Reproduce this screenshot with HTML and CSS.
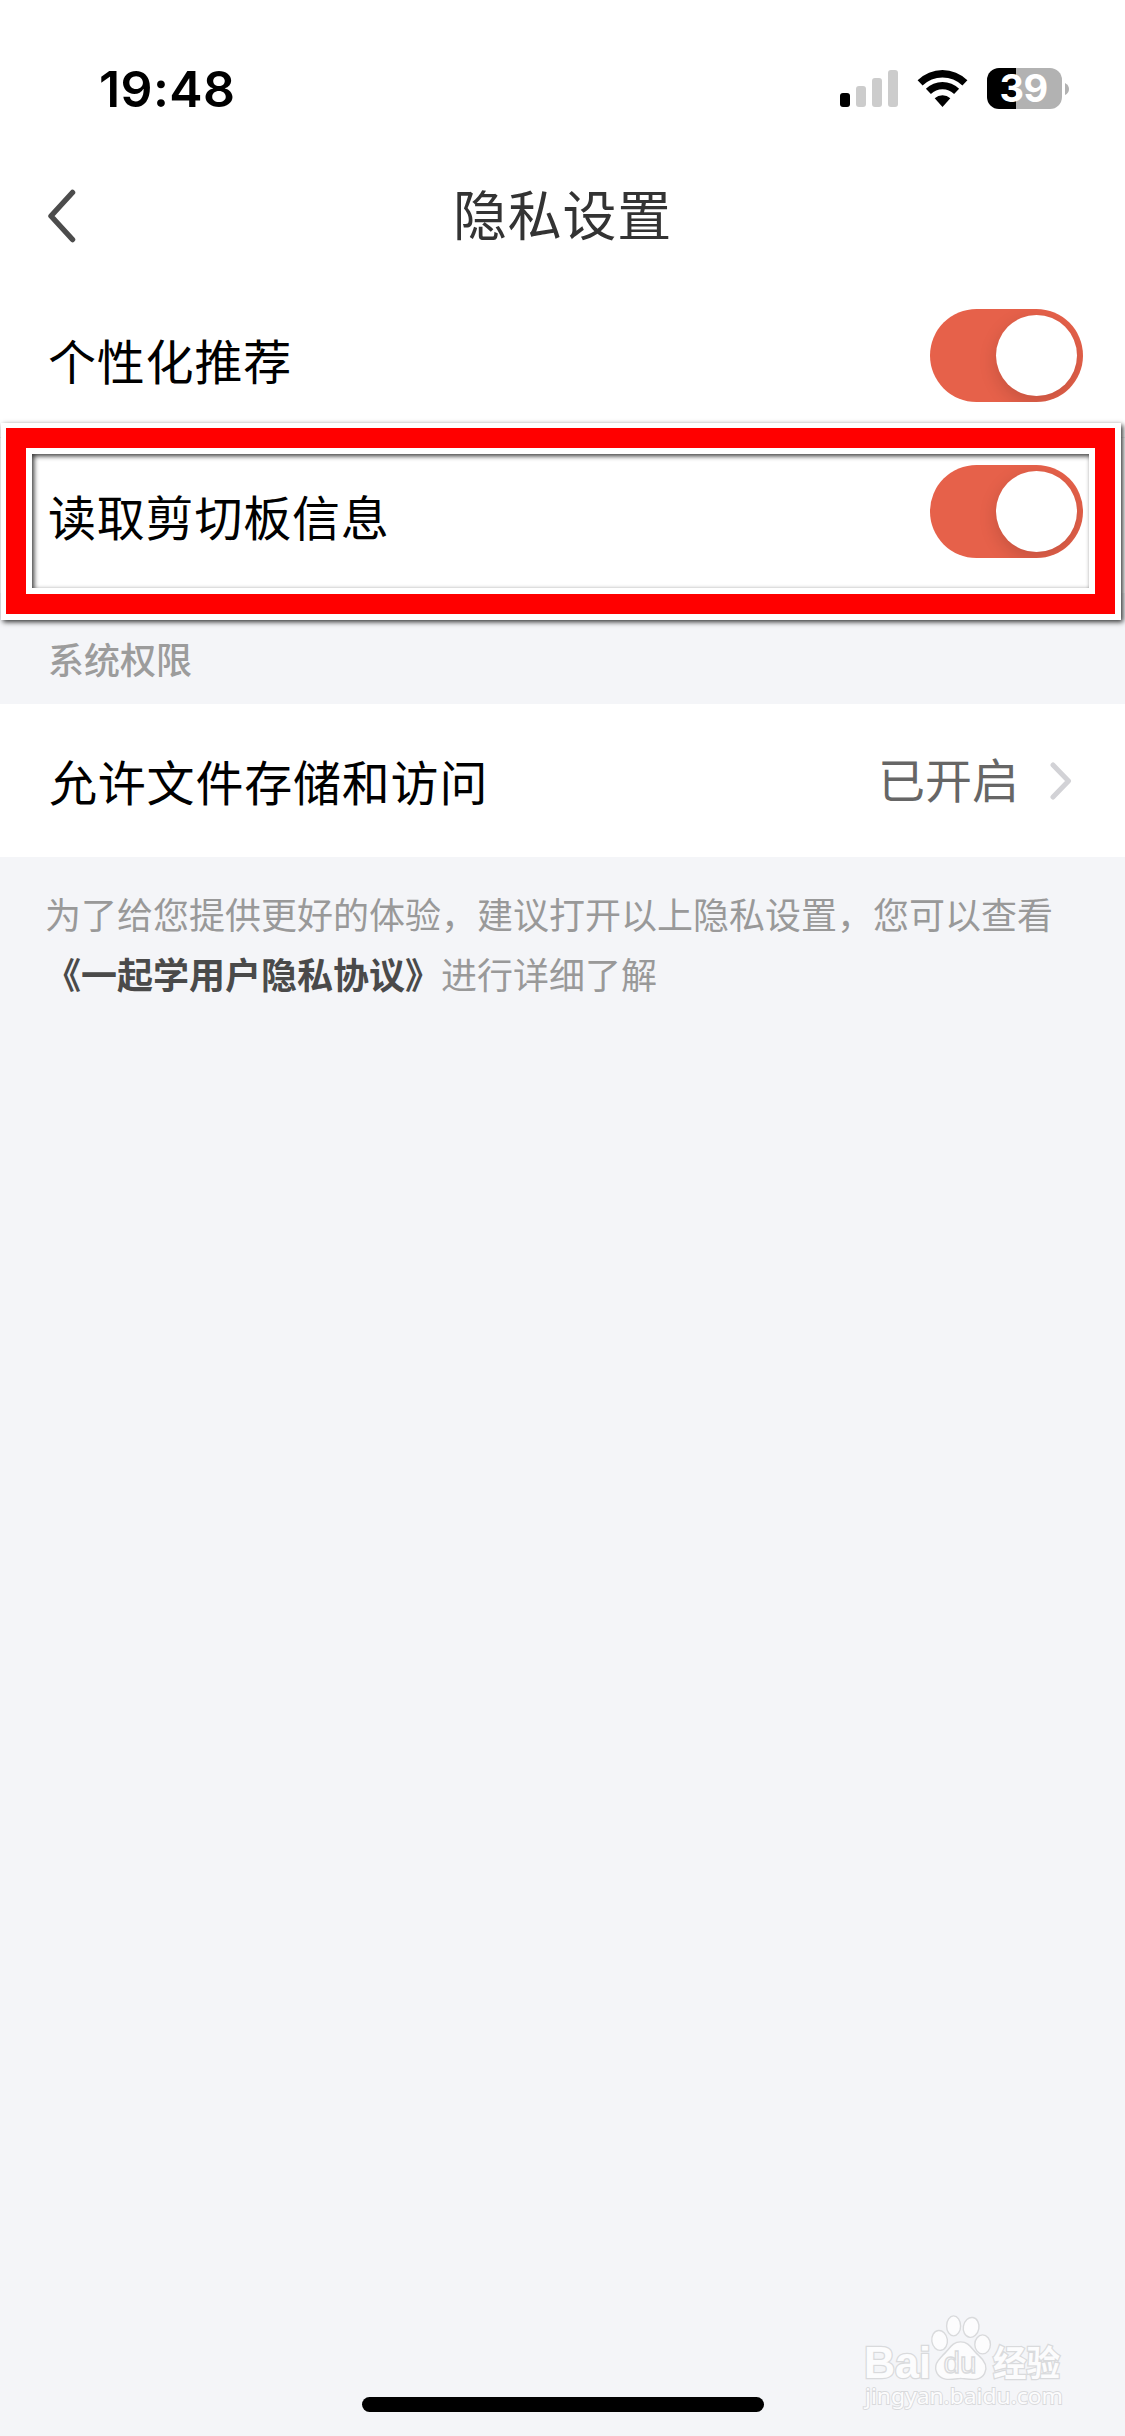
FILE: index.html
```html
<!DOCTYPE html>
<html lang="zh-CN">
<head>
<meta charset="utf-8">
<title>隐私设置</title>
<link rel="stylesheet" href="styles.css">
</head>
<body>
<div class="screen">
  <header class="status">
    <span class="time">19:48</span>
    <div class="indicators">
      <svg class="signal" width="58" height="37" viewBox="0 0 58 37">
        <rect x="0" y="23" width="10" height="14" rx="3" fill="#000"/>
        <rect x="16" y="16" width="10" height="21" rx="3" fill="#ccc"/>
        <rect x="32" y="8" width="10" height="29" rx="3" fill="#ccc"/>
        <rect x="48" y="0" width="10" height="37" rx="3" fill="#ccc"/>
      </svg>
      <svg class="wifi" width="51" height="37" viewBox="0 0 51 37">
        <path d="M0.6 10.3A35.5 35.5 0 0 1 50.4 10.3L45.4 15.6A28.2 28.2 0 0 0 5.6 15.6Z"/>
        <path d="M8.9 18.8A23.6 23.6 0 0 1 42.1 18.8L37.1 24A16.6 16.6 0 0 0 13.9 24Z"/>
        <path d="M17.7 28.3A11.5 11.5 0 0 1 33.3 28.3L25.5 37Z"/>
      </svg>
      <div class="battery"><span class="level">39</span></div>
      <svg class="nub" width="4" height="12" viewBox="0 0 4 12"><path d="M0 0Q4 2 4 6Q4 10 0 12Z" fill="#b2b2b2"/></svg>
    </div>
  </header>

  <nav class="nav">
    <svg class="back" width="29" height="54" viewBox="0 0 29 54"><path d="M25.5 3.500L4 27L25.500 50.500" fill="none" stroke="#4c4c4c" stroke-width="5.500" stroke-linecap="round" stroke-linejoin="round"/></svg>
    <h1 class="title">隐私设置</h1>
  </nav>

  <section class="group">
    <div class="row">
      <span class="label">个性化推荐</span>
      <span class="toggle"><span class="knob"></span></span>
    </div>
    <div class="row bordered">
      <span class="label">读取剪切板信息</span>
      <span class="toggle"><span class="knob"></span></span>
      <div class="highlight"><div class="highlight-red"><div class="highlight-inner"></div></div></div>
    </div>
  </section>

  <h2 class="section-title">系统权限</h2>

  <section class="group">
    <div class="row access">
      <span class="label">允许文件存储和访问</span>
      <span class="value">已开启</span>
      <svg class="chevron" width="22" height="38" viewBox="0 0 22 38"><path d="M3 3L18.5 19L3 35" fill="none" stroke="#d2d2d6" stroke-width="5" stroke-linecap="round" stroke-linejoin="round"/></svg>
    </div>
  </section>

  <p class="note">为了给您提供更好的体验，建议打开以上隐私设置，您可以查看<br><strong>《一起学用户隐私协议》</strong>进行详细了解</p>

  <footer class="bottom">
    <svg class="watermark" width="212" height="114" viewBox="0 0 212 114">
      <g fill="#fcfcfd" stroke="#d9dadc" stroke-width="1.4">
        <g stroke-width="2.6" paint-order="stroke">
          <text class="wm-brand" x="6" y="74" textLength="67" lengthAdjust="spacingAndGlyphs">Bai</text>
          <text class="wm-cn" x="135" y="72" textLength="67" lengthAdjust="spacingAndGlyphs">经验</text>
          <text class="wm-url" x="7" y="100" textLength="198" lengthAdjust="spacingAndGlyphs">jingyan.baidu.com</text>
        </g>
        <g transform="translate(1.6 1.4)">
          <ellipse cx="80" cy="35" rx="7.800" ry="10" transform="rotate(-8 80 35)"/>
          <ellipse cx="94" cy="20.500" rx="7" ry="10"/>
          <ellipse cx="111.500" cy="22" rx="7.800" ry="10" transform="rotate(10 111.500 22)"/>
          <ellipse cx="123" cy="39" rx="7.800" ry="9.500"/>
          <path d="M101 36.500C110 36.500 112 44 119 50C126 56 128 62 125 68C121 76 112 74 101 73C91 74 82 76 77.500 68C74 61 77 56 83 50C90 44 92 36.500 101 36.500Z"/>
          <text class="wm-du" x="84" y="68" textLength="33" lengthAdjust="spacingAndGlyphs">du</text>
        </g>
      </g>
    </svg>
    <div class="home-bar"></div>
  </footer>
</div>
</body>
</html>
```
FILE: styles.css
```css
* { box-sizing: border-box; }
body { margin: 0; background: #f4f5f8; }
.screen {
  width: 1125px;
  height: 2436px;
  display: flex;
  flex-direction: column;
  overflow: hidden;
  font-family: "Noto Sans CJK SC", sans-serif;
  color: #000;
}
.status {
  height: 147px;
  flex: none;
  display: flex;
  justify-content: space-between;
  padding: 59px 56px 0 99px;
  background: #fff;
}
.time {
  font: 600 50px/60px Inter, sans-serif;
  letter-spacing: 0.4px;
}
.indicators { display: flex; align-items: center; height: 59px; }
.wifi { margin-left: 19px; }
.battery {
  width: 75px;
  height: 41px;
  margin-left: 19px;
  border-radius: 12px;
  background: linear-gradient(90deg, #000 29px, #b2b2b2 29px);
  display: flex;
  justify-content: center;
  padding-right: 2px;
}
.level { font: 700 38px/41px Inter, sans-serif; color: #fff; letter-spacing: -0.5px; }
.nub { margin-left: 3px; }
.nav {
  height: 134px;
  flex: none;
  display: grid;
  grid-template-columns: 120px 1fr 120px;
  align-items: center;
  padding-bottom: 2px;
  background: #fff;
}
.back { margin: 6px 0 0 47px; }
.title {
  margin: 0;
  text-align: center;
  font-size: 54px;
  line-height: 80px;
  font-weight: 400;
  letter-spacing: 0.8px;
  color: #333;
}
.group { background: #fff; flex: none; }
.row {
  height: 156px;
  display: flex;
  align-items: center;
  padding: 0 42px 0 48px;
  position: relative;
}
.label { font-size: 48px; line-height: 72px; letter-spacing: 0.8px; flex: 1; }
.bordered { box-shadow: inset 0 1px #eeeff1; }
.toggle {
  width: 153px;
  height: 93px;
  margin-bottom: 7px;
  border-radius: 47px;
  background: #e6614a;
  display: flex;
  justify-content: flex-end;
  padding: 6px;
  overflow: hidden;
}
.knob {
  width: 81px;
  height: 81px;
  border-radius: 50%;
  background: #fff;
  box-shadow: 0 6px 18px rgba(0, 0, 0, 0.15);
}
.highlight {
  position: absolute;
  left: 1px;
  top: -14px;
  width: 1120px;
  height: 197px;
  border: 5px solid #fff;
  border-right-width: 6px;
  border-bottom-width: 6px;
  box-shadow: 2px 2px 5px rgba(0, 0, 0, 0.8);
}
.highlight-red { height: 100%; border: 20px solid #f00; }
.highlight-inner {
  height: 100%;
  border: 6px solid #fff;
}
.highlight-inner::after {
  content: "";
  display: block;
  height: 100%;
  box-shadow: inset 2px 2px 5px rgba(0, 0, 0, 0.8);
}
.section-title {
  height: 111px;
  flex: none;
  margin: 0;
  padding: 38px 48px 0;
  font-size: 36px;
  line-height: 54px;
  font-weight: 500;
  color: #9c9c9c;
}
.access { height: 153px; padding-right: 53px; }
.access .label { padding: 0 0 2px 1px; }
.value { font-size: 47px; line-height: 72px; color: #666; margin: 0 31px 6px 0; }
.note {
  margin: 26px 45px 0;
  font-size: 36px;
  line-height: 60px;
  color: #999;
  white-space: nowrap;
}
.note strong { color: #4a4a4a; font-weight: 700; }
.bottom {
  margin-top: auto;
  display: flex;
  flex-direction: column;
  padding-bottom: 24px;
}
.watermark { align-self: flex-end; margin: 0 55px -21px 0; overflow: visible; }
.wm-brand { font: 700 44px "Liberation Sans", sans-serif; }
.wm-du { font: 400 30px "Liberation Sans", sans-serif; }
.wm-cn { font: 700 35px "Noto Sans CJK SC", sans-serif; }
.wm-url { font: 400 22px "Noto Sans", sans-serif; stroke-width: 1.8px; }
.home-bar {
  width: 402px;
  height: 15px;
  border-radius: 8px;
  background: #000;
  align-self: center;
}
```
